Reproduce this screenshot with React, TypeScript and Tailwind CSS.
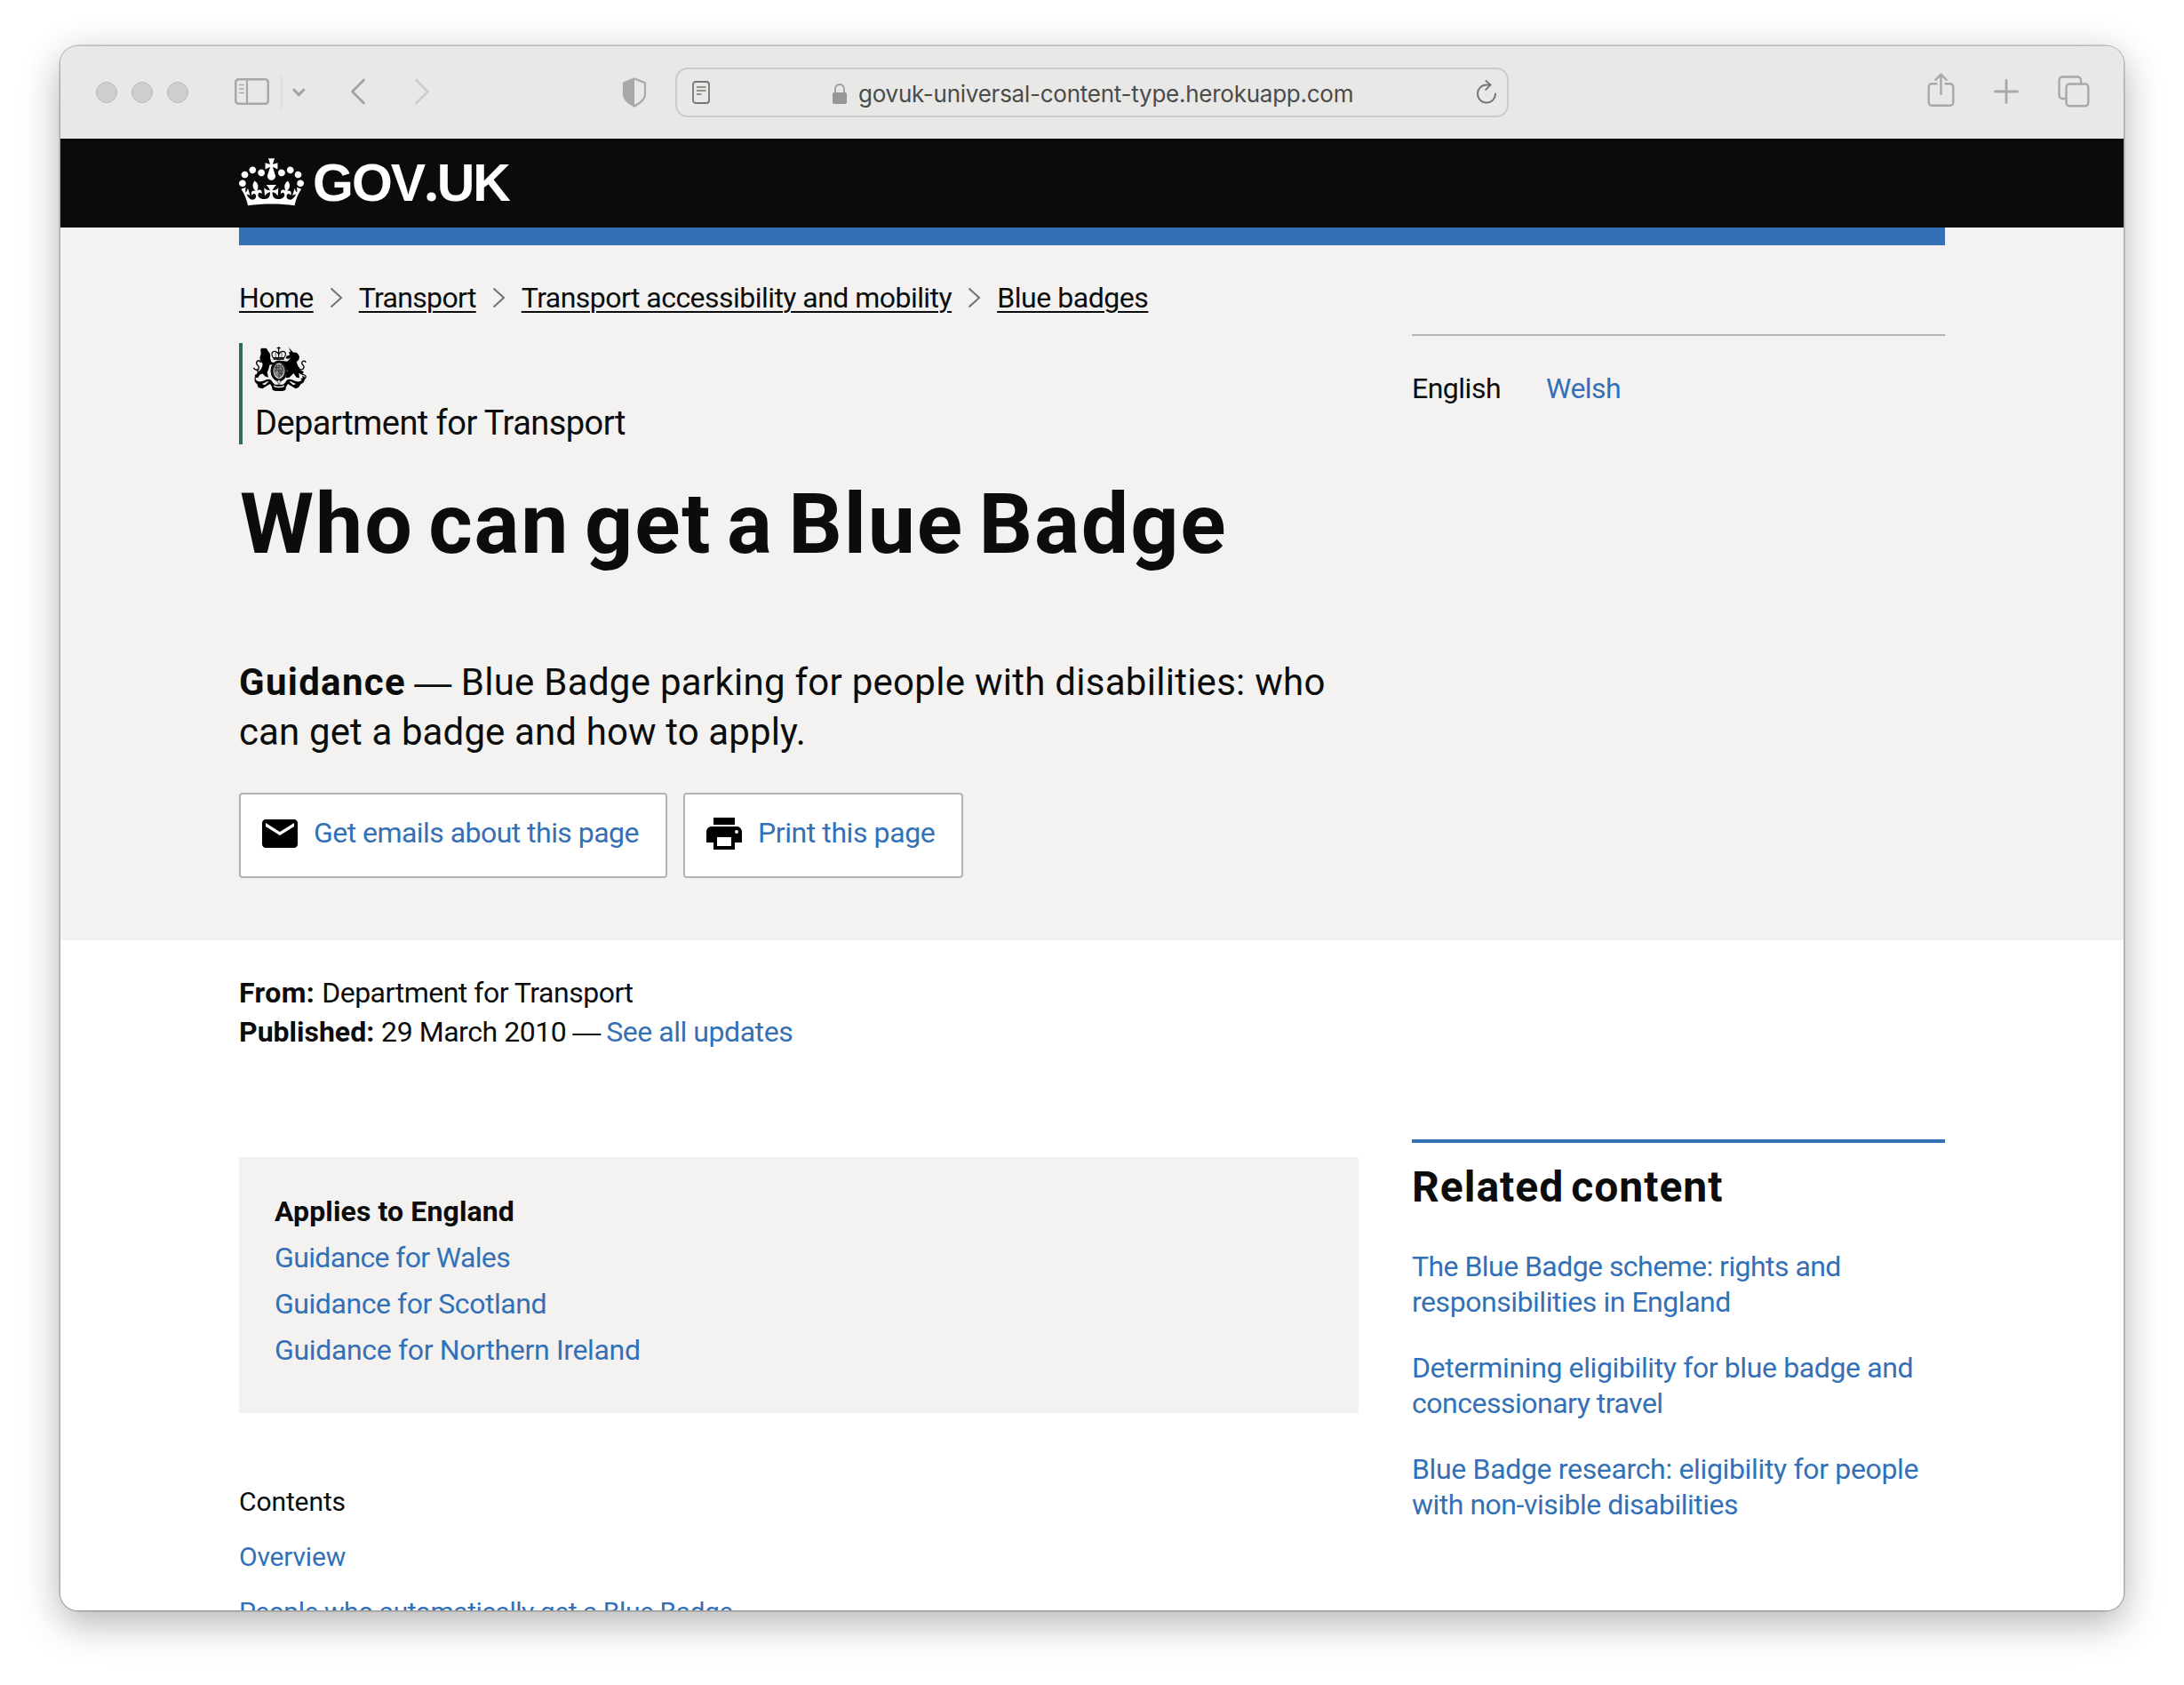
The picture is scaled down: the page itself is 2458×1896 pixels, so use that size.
import React from "react";

const CROWN =
  "M25 30.2c3.5 1.5 7.7-.2 9.1-3.7 1.5-3.6-.2-7.8-3.9-9.2-3.6-1.4-7.6.3-9.1 3.9-1.4 3.5.3 7.5 3.9 9zM9 39.5c3.6 1.5 7.8-.2 9.2-3.7 1.5-3.6-.2-7.8-3.9-9.1-3.6-1.5-7.6.2-9.1 3.8-1.4 3.5.3 7.5 3.8 9zM4.4 57.2c3.5 1.5 7.7-.2 9.1-3.8 1.5-3.6-.2-7.7-3.9-9.1-3.5-1.5-7.6.3-9.1 3.8-1.4 3.5.3 7.6 3.9 9.1zm38.3-21.4c3.5 1.5 7.7-.2 9.1-3.8 1.5-3.6-.2-7.7-3.9-9.1-3.6-1.5-7.6.3-9.1 3.8-1.3 3.6.4 7.7 3.9 9.1zm64.4-5.6c-3.6 1.5-7.8-.2-9.1-3.7-1.5-3.6.2-7.8 3.8-9.2 3.6-1.4 7.7.3 9.2 3.9 1.3 3.5-.4 7.5-3.9 9zm15.9 9.3c-3.6 1.5-7.7-.2-9.1-3.7-1.5-3.6.2-7.8 3.7-9.1 3.6-1.5 7.7.2 9.2 3.8 1.5 3.5-.3 7.5-3.8 9zm4.7 17.7c-3.6 1.5-7.8-.2-9.2-3.8-1.5-3.6.2-7.7 3.9-9.1 3.6-1.5 7.7.3 9.2 3.8 1.3 3.5-.4 7.6-3.9 9.1zM89.3 35.8c-3.6 1.5-7.8-.2-9.2-3.8-1.4-3.6.2-7.7 3.9-9.1 3.6-1.5 7.7.3 9.2 3.8 1.4 3.6-.3 7.7-3.9 9.1zM69.7 17.7l8.9 4.7V9.3l-8.9 2.8c-.2-.3-.5-.6-.9-.9L72.4 0H59.6l3.5 11.2c-.3.3-.6.5-.9.9l-8.8-2.8v13.1l8.8-4.7c.3.3.6.7.9.9l-5 15.4v.1c-.2.8-.4 1.6-.4 2.4 0 4.1 3.1 7.5 7 8.1h.2c.3 0 .7.1 1 .1.4 0 .7 0 1-.1h.2c4-.6 7.1-4.1 7.1-8.1 0-.8-.1-1.7-.4-2.4V34l-5.1-15.4c.4-.2.7-.6 1-.9zM66 92.8c16.9 0 32.8 1.1 47.1 3.2 4-16.9 8.9-26.7 14-33.5l-9.6-3.4c1 4.9 1.1 7.2 0 10.2-1.5-1.4-3-4.3-4.2-8.7L108.6 76c2.8-2 5-3.2 7.5-3.3-4.4 9.4-10 11.9-13.6 11.2-4.3-.8-6.3-4.6-5.6-7.9 1-4.7 5.7-5.9 8-.5 4.3-8.7-3-11.4-7.6-8.8 7.1-7.2 7.9-13.5 2.1-21.1-8 6.1-8.1 12.3-4.5 20.8-4.7-5.4-12.1-2.5-9.5 6.2 3.4-5.2 7.9-2 7.2 3.1-.6 4.3-6.4 7.8-13.5 7.2-10.3-.9-10.9-8-11.2-13.8 2.5-.5 7.1 1.8 11 7.3L80.2 60c-4.1 4.4-8 5.3-12.3 5.4 1.4-4.4 8-11.6 8-11.6H55.5s6.4 7.2 7.9 11.6c-4.2-.1-8-1-12.3-5.4l1.4 16.4c3.9-5.5 8.5-7.7 10.9-7.3-.3 5.8-.9 12.8-11.1 13.8-7.2.6-12.9-2.9-13.5-7.2-.7-5 3.8-8.3 7.1-3.1 2.7-8.7-4.6-11.6-9.4-6.2 3.7-8.5 3.6-14.7-4.6-20.8-5.8 7.6-5 13.9 2.2 21.1-4.7-2.6-11.9.1-7.7 8.8 2.3-5.5 7.1-4.2 8.1.5.7 3.3-1.3 7.1-5.7 7.9-3.5.7-9-1.8-13.5-11.2 2.5.1 4.7 1.3 7.5 3.3l-4.7-15.4c-1.2 4.4-2.7 7.2-4.3 8.7-1.1-3-.9-5.3 0-10.2l-9.5 3.4c5 6.9 9.9 16.7 14 33.5 14.8-2.1 30.8-3.2 47.7-3.2z";

const Stroke = {
  fill: "none",
  strokeLinecap: "round" as const,
  strokeLinejoin: "round" as const,
};

function Toolbar() {
  return (
    <div className="flex h-[104px] items-center bg-[#e8e8e6] font-[Inter,sans-serif]">
      <div className="ml-10 flex gap-4">
        <span className="size-6 rounded-full border border-[#b9b9b7] bg-[#cfcfcd]" />
        <span className="size-6 rounded-full border border-[#b9b9b7] bg-[#cfcfcd]" />
        <span className="size-6 rounded-full border border-[#b9b9b7] bg-[#cfcfcd]" />
      </div>
      <svg className="mb-[2px] ml-[52px] h-[30px] w-[39px]" viewBox="0 0 39 30" stroke="#a8a8a6" {...Stroke}>
        <rect x="1.2" y="1.2" width="36.6" height="27.6" rx="3.6" strokeWidth="2.6" />
        <path d="M14 1v28" strokeWidth="2.2" />
        <path d="M5.5 7.5h4.6M5.5 12h4.6M5.5 16.5h4.6" strokeWidth="1.5" />
      </svg>
      <span className="ml-[13px] h-9 w-[2px] bg-[#dcdcda]" />
      <svg className="mb-[1px] ml-[11px] h-[10px] w-[15px]" viewBox="0 0 15 10" stroke="#a2a2a0" strokeWidth="3" {...Stroke}>
        <path d="M1.8 2l5.5 5.8L12.8 2" />
      </svg>
      <svg className="mb-[2px] ml-[50px] h-[30px] w-[18px]" viewBox="0 0 18 30" stroke="#a2a2a0" strokeWidth="2.8" {...Stroke}>
        <path d="M15.5 2L2.5 15l13 13" />
      </svg>
      <svg className="mb-[2px] ml-[54px] h-[30px] w-[18px]" viewBox="0 0 18 30" stroke="#cececc" strokeWidth="2.8" {...Stroke}>
        <path d="M2.5 2l13 13-13 13" />
      </svg>
      <svg className="mb-[1px] ml-[216px] h-[34px] w-[28px]" viewBox="0 0 28 34">
        <path d="M14 1.5l12 4.8v13.2c0 5.5-5.5 9.5-12 13C7.5 29 2 25 2 19.5V6.3z" fill="none" stroke="#a8a8a6" strokeWidth="2.2" strokeLinejoin="round" />
        <path d="M14 1L1.5 6.3v13.2C1.5 25 7 29.5 14 33z" fill="#a8a8a6" />
      </svg>
      <div className="ml-8 flex h-14 w-[938px] items-center rounded-[14px] border-2 border-[#cbcbc9]">
        <svg className="ml-[17px] h-[26px] w-5" viewBox="0 0 20 26" stroke="#757573" {...Stroke}>
          <rect x="1" y="1" width="18" height="24" rx="3" strokeWidth="1.8" />
          <path d="M5.5 7h9.5M5.5 11h9.5M5.5 15h4.5" strokeWidth="1.5" />
        </svg>
        <svg className="ml-[137px] mt-[3px] h-6 w-[18px]" viewBox="0 0 18 24">
          <path d="M4 11V6.500c0-3.300 2.100-5.500 5-5.500s5 2.200 5 5.500V11" fill="none" stroke="#9a9a98" strokeWidth="1.8" />
          <rect x="1" y="10" width="16" height="13" rx="1.8" fill="#979795" />
        </svg>
        <span className="ml-[12px] mt-[4px] w-[560px] whitespace-nowrap text-[26px] leading-[36px] tracking-[-0.25px] text-[#4b4b4a]">
          govuk-universal-content-type.herokuapp.com
        </span>
        <svg className="mb-[1px] ml-[135px] h-[27px] w-[24px]" viewBox="0 0 24 27" stroke="#757573" strokeWidth="1.9" {...Stroke}>
          <path d="M22 15.500a10 10 0 1 1-10-10h4.500" />
          <path d="M11.500 1l5 4.600-5.300 5.300" />
        </svg>
      </div>
      <svg className="mb-[6px] ml-[471px] h-[38px] w-[31px]" viewBox="0 0 31 38" stroke="#a8a8a6" strokeWidth="2.4" {...Stroke}>
        <path d="M10.500 12.300H5.200a3.500 3.500 0 0 0-3.500 3.500v17.500a3.500 3.500 0 0 0 3.500 3.500h20.600a3.500 3.500 0 0 0 3.500-3.500V15.800a3.500 3.500 0 0 0-3.500-3.500h-5.300" />
        <path d="M15.500 24V2M9.300 8l6.200-6.300L21.700 8" />
      </svg>
      <svg className="mb-[3px] ml-[44px] size-[28px]" viewBox="0 0 28 28" stroke="#a8a8a6" strokeWidth="2.8" {...Stroke}>
        <path d="M14 1.500v25M1.500 14h25" />
      </svg>
      <svg className="mb-[3px] ml-[44px] h-[36px] w-[36px]" viewBox="0 0 36 36" stroke="#a8a8a6" strokeWidth="2.4" {...Stroke}>
        <rect x="9.5" y="9.5" width="24.8" height="24.8" rx="3.5" />
        <path d="M26 9V5a3.500 3.500 0 0 0-3.500-3.500H5A3.500 3.500 0 0 0 1.500 5v17.500A3.500 3.500 0 0 0 5 26h4" />
      </svg>
    </div>
  );
}

function CoatOfArms() {
  return (
    <svg className="h-[50px] w-[60px]" viewBox="75 30 180 150" fill="#000">
      {/* crown */}
      <g fill="none" stroke="#000" strokeWidth="3.5">
        <path d="M161 30v38M155 35h12" />
        <path d="M143 68c-9-10-6-22 4-22 7 0 11 4 14 10 3-6 7-10 14-10 10 0 13 12 4 22z" />
        <path d="M152 66c-2-6-2-10 0-16M170 66c2-6 2-10 0-16" strokeWidth="2" />
        <path d="M143 72h36" strokeWidth="5" />
      </g>
      {/* lion */}
      <path d="M100 44c-2-6 4-10 10-8 8-3 14 2 14 8 8 6 10 16 8 24l4 14 8 2-2 6-12 2c-2 10-4 18-8 24l4 18-12-4-8-10c-8 4-12 8-14 14l-10 2c2-14 8-20 18-28 4-8 8-14 6-22-6-4-10-12-8-22 2-6 4-8 2-20z" />
      <path d="M100 84c-2-10-14-8-14 2 0 8 10 8 8 16-2 10-12 8-18 0M106 120c-12 4-22-6-12-16" fill="none" stroke="#000" strokeWidth="4" />
      {/* unicorn */}
      <path d="M194 32l17 18c10-2 16 4 20 14l-2 10-8 8c4 12 8 20 14 28l10 4-2 8-14-2 2 16-10-2-10-14-14 14-12 2 6-26-8-18-12-6 2-8 16 2 12-10c-6 0-10 2-16 0l2-8 12-4-4-8 6-4z" />
      <path d="M228 100c2 10 16 10 18 0 2-8-10-8-6-18 3-6 12-4 12 2M232 116c4 12 16 4 20 14 2 8-8 14-16 8" fill="none" stroke="#000" strokeWidth="4" />
      {/* garter and shield */}
      <ellipse cx="162" cy="112" rx="24" ry="31" fill="#d8d7d6" stroke="#000" strokeWidth="9" />
      <ellipse cx="162" cy="112" rx="24" ry="31" fill="none" stroke="#777" strokeWidth="1.5" strokeDasharray="3 3" />
      <path d="M147 92h30v22c0 12-8 16-15 20-7-4-15-8-15-20z" fill="#8d8d8b" stroke="#333" strokeWidth="2" />
      <path d="M162 92v42M147 111h30M154 93v16M169 112v16M148 101h13M163 120h12M168 94l6 14" stroke="#222" strokeWidth="2.5" fill="none" />
      {/* motto ribbon */}
      <path d="M86 124c-6 12-4 22 8 24 12 2 20-8 32-8 8 0 12 4 14 10l8 8h28l8-8c2-6 6-10 14-10 12 0 20 10 32 8 10-2 14-10 10-20l8 4c2 12-2 22-12 24l-8 12-10 4-16-10-10-6-6 10-2 10c-10 6-34 6-44 0l-2-10-6-10-10 6-16 10-14-4-4-12c-10-4-10-20-6-32z" />
      <path d="M104 156c10-2 14-10 24-8l-14 12zM220 156c-10-2-14-10-24-8l14 12zM144 160c10 6 26 6 36 0l-1 6c-10 4-24 4-34 0z" fill="#f3f2f1" />
      <path d="M162 140l6 9-6 9-6-9z" fill="#d8d7d6" stroke="#000" strokeWidth="1.5" />
    </svg>
  );
}

function Chevron() {
  return (
    <svg className="ml-[18px] mr-[18px] h-6 w-[15px]" viewBox="0 0 15 24" fill="none" stroke="#6b7377" strokeWidth="2">
      <path d="M1.500 1.500L13 12 1.500 22.500" />
    </svg>
  );
}

const crumbs = [
  { label: "Home", cls: "tracking-[-0.6px]" },
  { label: "Transport", cls: "tracking-[-0.67px]" },
  { label: "Transport accessibility and mobility", cls: "tracking-[-0.54px]" },
  { label: "Blue badges", cls: "tracking-[-0.45px]" },
];

const related = [
  [
    { t: "The Blue Badge scheme: rights and", cls: "tracking-[-0.55px]" },
    { t: "responsibilities in England", cls: "tracking-[-0.46px]" },
  ],
  [
    { t: "Determining eligibility for blue badge and", cls: "tracking-[-0.38px]" },
    { t: "concessionary travel", cls: "tracking-[-0.5px]" },
  ],
  [
    { t: "Blue Badge research: eligibility for people", cls: "tracking-[-0.34px]" },
    { t: "with non-visible disabilities", cls: "tracking-[-0.49px]" },
  ],
];

export default function App() {
  return (
    <div className="h-[1896px] w-[2458px] overflow-hidden bg-white pl-[68px] pt-[52px]">
      <div className="h-[1760px] w-[2322px] rounded-[20px] shadow-[0_0_0_1.5px_rgba(0,0,0,0.22),0_16px_44px_rgba(0,0,0,0.26),0_0_50px_rgba(0,0,0,0.06)]">
        <div className="h-full overflow-hidden rounded-[20px] bg-white font-[Roboto,sans-serif] text-[32px] text-[#0b0c0c]">
          <Toolbar />

          <header className="flex h-[100px] items-center border-t-2 border-black bg-[#0b0b0b] pl-[201px] text-white">
            <svg className="mb-[5px] h-[54px] w-[73px]" viewBox="0 0 132 97" fill="currentColor">
              <path d={CROWN} />
            </svg>
            <span className="mb-[5px] ml-[10px] font-['Liberation_Sans',sans-serif] text-[59px] font-bold leading-[80px] tracking-[-2px]">
              GOV<span className="font-['Noto_Sans',sans-serif]">.</span>UK
            </span>
          </header>

          <section className="h-[802px] bg-[#f3f2f1] px-[201px]">
            <div className="h-5 bg-[#3470b5]" />
            <nav className="mt-[39px] flex h-10 items-center whitespace-nowrap leading-10">
              {crumbs.map((c, i) => (
                <React.Fragment key={c.label}>
                  {i > 0 && <Chevron />}
                  <a className={"underline decoration-2 underline-offset-[4px] " + c.cls}>{c.label}</a>
                </React.Fragment>
              ))}
            </nav>
            <div className="mt-[21px] flex gap-[60px]">
              <div className="w-[1260px] pt-[10px]">
                <div className="h-[114px] border-l-4 border-[#2f6b5a] pt-1">
                  <div className="ml-3">
                    <CoatOfArms />
                  </div>
                  <p className="ml-[14px] mt-[13px] text-[38px] leading-[46px] tracking-[-0.55px]">Department for Transport</p>
                </div>
                <h1 className="ml-[1px] mt-10 whitespace-nowrap text-[95px] font-bold leading-[100px] tracking-[1.9px] [word-spacing:-9px]">Who can get a Blue Badge</h1>
                <p className="mt-[100px] whitespace-nowrap text-[42px] leading-[56px]">
                  <b className="tracking-[1.3px]">Guidance</b>{" "}
                  <span className="-ml-[1px] font-['Liberation_Sans',sans-serif] leading-none">—</span>{" "}
                  <span className="tracking-[0.27px]">Blue Badge parking for people with disabilities: who</span>
                  <br />
                  <span className="tracking-[0.12px]">can get a badge and how to apply.</span>
                </p>
                <div className="mt-10 flex gap-[18px] text-[#3470b5]">
                  <a className="flex h-24 w-[482px] items-start whitespace-nowrap rounded border-2 border-[#b1b4b6] bg-white pl-5 pt-5 leading-[48px] tracking-[-0.54px]">
                    <svg className="mr-[14px] size-12" viewBox="0 0 24 24" fill="#000">
                      <path d="M20 4H4c-1.100 0-1.990.9-1.990 2L2 18c0 1.100.9 2 2 2h16c1.100 0 2-.9 2-2V6c0-1.100-.9-2-2-2zm0 4l-8 5-8-5V6l8 5 8-5v2z" />
                    </svg>
                    <span className="-mt-[1px]">Get emails about this page</span>
                  </a>
                  <a className="flex h-24 w-[315px] items-start whitespace-nowrap rounded border-2 border-[#b1b4b6] bg-white pl-5 pt-5 leading-[48px] tracking-[-0.42px]">
                    <svg className="mr-[14px] size-12" viewBox="0 0 24 24" fill="#000">
                      <path d="M19 8H5c-1.660 0-3 1.340-3 3v6h4v4h12v-4h4v-6c0-1.660-1.340-3-3-3zm-3 11H8v-5h8v5zm3-7c-.55 0-1-.45-1-1s.45-1 1-1 1 .45 1 1-.45 1-1 1zm-1-9H6v4h12V3z" />
                    </svg>
                    <span className="-mt-[1px]">Print this page</span>
                  </a>
                </div>
              </div>
              <div className="h-[100px] w-[600px] border-t-2 border-[#b1b4b6] pt-[39px] leading-10">
                <span className="tracking-[-0.5px]">English</span>
                <a className="ml-[51px] tracking-[-0.56px] text-[#3470b5]">Welsh</a>
              </div>
            </div>
          </section>

          <main className="px-[201px] pt-[37px]">
            <div className="whitespace-nowrap leading-[44px]">
              <p>
                <b className="tracking-[0.4px]">From:</b> <span className="tracking-[-0.49px]">Department for Transport</span>
              </p>
              <p>
                <b>Published:</b> <span className="tracking-[-0.45px]">29 March 2010</span>{" "}
                <span className="-ml-[1px] font-['Liberation_Sans',sans-serif] leading-none">—</span>{" "}
                <a className="-ml-[2px] tracking-[-0.45px] text-[#3470b5]">See all updates</a>
              </p>
            </div>
            <div className="mt-[99px] flex gap-[60px]">
              <div className="w-[1260px] pt-5">
                <div className="flex h-[288px] flex-col bg-[#f3f2f1] pl-10 pt-[35px] leading-[52px] text-[#3470b5]">
                  <b className="tracking-[0.12px] text-[#0b0c0c]">Applies to England</b>
                  <a className="tracking-[-0.65px]">Guidance for Wales</a>
                  <a className="tracking-[-0.45px]">Guidance for Scotland</a>
                  <a className="tracking-[-0.34px]">Guidance for Northern Ireland</a>
                </div>
                <div className="mt-[69px] flex flex-col text-[30px] leading-[62px] text-[#3470b5]">
                  <span className="tracking-[-0.1px] text-[#0b0c0c]">Contents</span>
                  <a className="tracking-[-0.2px]">Overview</a>
                  <a className="tracking-[-0.46px]">People who automatically get a Blue Badge</a>
                </div>
              </div>
              <aside className="w-[600px] border-t-4 border-[#3470b5] pt-5">
                <h2 className="text-[48px] font-bold leading-[60px] tracking-[1px] [word-spacing:-5px]">Related content</h2>
                <div className="mt-[39px] flex flex-col gap-[34px] whitespace-nowrap leading-10 text-[#3470b5]">
                  {related.map((lines) => (
                    <a key={lines[0].t}>
                      {lines.map((l) => (
                        <span key={l.t} className={"block " + l.cls}>
                          {l.t}
                        </span>
                      ))}
                    </a>
                  ))}
                </div>
              </aside>
            </div>
          </main>
        </div>
      </div>
    </div>
  );
}
